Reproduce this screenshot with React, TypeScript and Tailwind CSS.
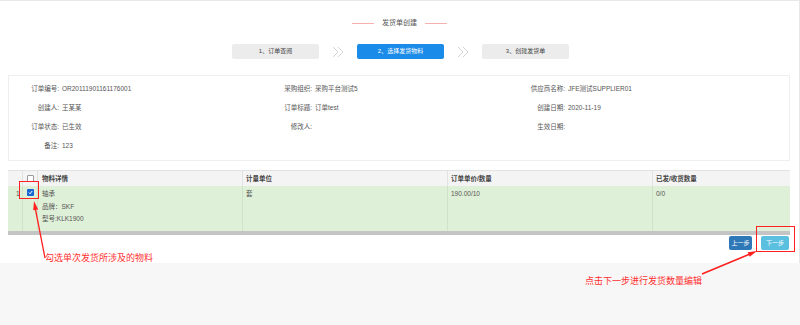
const font = "font-['Liberation_Sans','Noto_Sans_CJK_SC',sans-serif]";

const infoRows: [string, string][][] = [
  [
    ["订单编号:", "OR20111901161176001"],
    ["采购组织:", "采购平台测试5"],
    ["供应商名称:", "JFE测试SUPPLIER01"],
  ],
  [
    ["创建人:", "王某某"],
    ["订单标题:", "订单test"],
    ["创建日期:", "2020-11-19"],
  ],
  [
    ["订单状态:", "已生效"],
    ["修改人:", ""],
    ["生效日期:", ""],
  ],
  [["备注:", "123"]],
];

const Chevrons = () => (
  <svg width="14" height="12" viewBox="0 0 14 12" className="mx-[12px]">
    <polyline points="2,1 7,6 2,11" fill="none" stroke="#d4d4d4" strokeWidth="1" />
    <polyline points="7,1 12,6 7,11" fill="none" stroke="#d4d4d4" strokeWidth="1" />
  </svg>
);

const Step = ({ label, active }: { label: string; active?: boolean }) => (
  <div
    className={`flex h-[15px] w-[87px] items-center justify-center rounded-[2px] text-[6px] ${
      active ? "bg-[#1a8be8] text-white" : "bg-[#ececec] text-[#444]"
    }`}
  >
    {label}
  </div>
);

const Check = ({ checked }: { checked?: boolean }) =>
  checked ? (
    <div className="flex h-[7px] w-[7px] items-center justify-center rounded-[1px] bg-[#1766d6]">
      <svg width="5" height="5" viewBox="0 0 5 5">
        <polyline points="0.8,2.6 2,3.8 4.2,1" fill="none" stroke="white" strokeWidth="1" />
      </svg>
    </div>
  ) : (
    <div className="h-[7px] w-[7px] rounded-[1px] border border-[#999] bg-white" />
  );

export default function App() {
  return (
    <div className={`relative h-[325px] w-[800px] overflow-hidden bg-[#f7f7f7] ${font}`}>
      <div className="flex h-[263px] flex-col border-t border-r border-[#e8e8e8] bg-white">
        {/* title */}
        <div className="mt-[16px] flex h-[12px] items-center justify-center">
          <div className="h-px w-[22px] bg-[#f7b0b0]" />
          <span className="mx-[8px] text-[7px] text-[#555]">发货单创建</span>
          <div className="h-px w-[22px] bg-[#f7b0b0]" />
        </div>

        {/* steps */}
        <div className="mt-[15px] flex items-center justify-center pl-[2px]">
          <Step label="1、订单查阅" />
          <Chevrons />
          <Step label="2、选择发货物料" active />
          <Chevrons />
          <Step label="3、创建发货单" />
        </div>

        {/* order info */}
        <div className="mt-[16px] ml-[8px] w-[782px] border border-[#eeeeee] pt-[3px] pb-[5px] text-[6.5px] text-[#555]">
          {infoRows.map((row, i) => (
            <div key={i} className="grid h-[19px] grid-cols-[253px_253px_1fr] items-center">
              {row.map(([label, value]) => (
                <div key={label} className="flex items-center">
                  <span className="w-[50px] text-right">{label}</span>
                  <span className="ml-[3px]">{value}</span>
                </div>
              ))}
            </div>
          ))}
        </div>

        {/* table */}
        <div className="mt-[9px] ml-[8px] w-[782px] text-[6.5px]">
          <div className="grid h-[16px] grid-cols-[15px_15px_205px_205px_205px_1fr] border-t border-[#e2e2e2] bg-[#f4f4f4] font-semibold text-[#444]">
            <div className="border-r border-[#e2e2e2]" />
            <div className="flex items-center justify-center border-r border-[#e2e2e2]">
              <Check />
            </div>
            <div className="flex items-center border-r border-[#e2e2e2] pl-[4px]">物料详情</div>
            <div className="flex items-center border-r border-[#e2e2e2] pl-[3px]">计量单位</div>
            <div className="flex items-center border-r border-[#e2e2e2] pl-[3px]">订单单价/数量</div>
            <div className="flex items-center pl-[3px]">已发/收货数量</div>
          </div>
          <div className="grid h-[45px] grid-cols-[15px_15px_205px_205px_205px_1fr] bg-[#dff0d8] leading-[12.5px] text-[#555]">
            <div className="border-r border-[#d0e2c8] pt-[2px] pl-[8px]">1</div>
            <div className="flex justify-center border-r border-[#d0e2c8] pt-[3px]">
              <Check checked />
            </div>
            <div className="border-r border-[#d0e2c8] pt-[2px] pl-[4px]">
              <div>轴承</div>
              <div>品牌：SKF</div>
              <div>型号:KLK1900</div>
            </div>
            <div className="border-r border-[#d0e2c8] pt-[2px] pl-[3px]">套</div>
            <div className="border-r border-[#d0e2c8] pt-[2px] pl-[3px]">190.00/10</div>
            <div className="pt-[2px] pl-[3px]">0/0</div>
          </div>
          <div className="h-[4px] bg-[#c4c4c4]" />
        </div>

        {/* buttons */}
        <div className="mt-[1px] mr-[10px] flex justify-end gap-[9px]">
          <button className="flex h-[14px] w-[23px] items-center justify-center rounded-[2px] bg-[#2f78b8] text-[6px] text-white">
            上一步
          </button>
          <button className="flex h-[14px] w-[28px] items-center justify-center rounded-[2px] bg-[#5bbfe0] text-[6px] text-white">
            下一步
          </button>
        </div>
      </div>

      {/* annotations */}
      <div className="absolute top-[181px] left-[19px] h-[18px] w-[20px] border-[1.5px] border-[#ff2020]" />
      <div className="absolute top-[226px] left-[756px] h-[26px] w-[39px] border-[1.5px] border-[#ff2020]" />
      <svg className="pointer-events-none absolute inset-0" width="800" height="325">
        <line x1="45" y1="258" x2="35" y2="207" stroke="#ff2020" strokeWidth="1.3" />
        <polygon points="34,201 38.2,209.4 33.2,210.3" fill="#ff2020" />
        <line x1="702" y1="274" x2="750" y2="254" stroke="#ff2020" strokeWidth="1.6" />
        <polygon points="757,251 749.7,256.8 747.7,252.2" fill="#ff2020" />
      </svg>
      <div className="absolute top-[252px] left-[45px] text-[9px] leading-[12px] text-[#ff3030]">
        勾选单次发货所涉及的物料
      </div>
      <div className="absolute top-[275px] left-[585px] text-[9px] leading-[12px] text-[#ff3030]">
        点击下一步进行发货数量编辑
      </div>
    </div>
  );
}
